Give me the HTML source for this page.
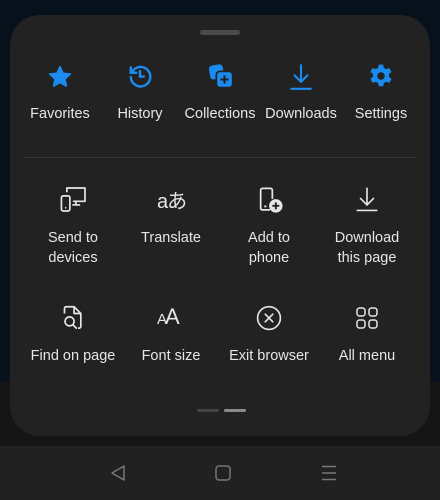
<!DOCTYPE html><html><head><style>
body{margin:0;width:440px;height:500px;background:#07111b;position:relative;overflow:hidden;font-family:"Liberation Sans","Noto Sans CJK JP",sans-serif;color:#e6e6e6}
.band{position:absolute;left:0;top:382px;width:440px;height:64px;background:#151515}
.nav{position:absolute;left:0;top:446px;width:440px;height:54px;background:#212121}
.panel{position:absolute;left:10px;top:15px;width:420px;height:421px;background:#222;border-radius:30px}
.it{position:absolute;text-align:center;font-size:14.5px;line-height:19.5px;width:100px;margin-left:-50px}
.ab{position:absolute}
</style></head><body>
<div class="band"></div><div class="nav"></div>
<div class="panel"></div>
<div class="ab" style="left:200px;top:30px;width:40px;height:5px;border-radius:3px;background:#4a4a4a"></div>
<svg class="ab" style="left:47px;top:64px" width="26" height="26" viewBox="0 0 24 24"><path fill="#1a8cf0" d="M12 2.5l2.9 6.1 6.6.7-5 4.5 1.4 6.6L12 17.1l-5.9 3.3 1.4-6.6-5-4.5 6.6-.7z" stroke="#1a8cf0" stroke-linejoin="round" stroke-width="1.5"/></svg>
<svg class="ab" style="left:127px;top:63px" width="26" height="26" viewBox="0 0 24 24" fill="none" stroke="#1a8cf0" stroke-width="2.2" stroke-linecap="round"><path d="M4.5 8.5A9 9 0 1 1 3.5 13"/><path d="M3.5 4v5h5"/><path d="M12 7.5v5h3.5"/></svg>
<svg class="ab" style="left:207px;top:62px" width="28" height="28" viewBox="0 0 24 24"><rect x="2" y="2.5" width="12" height="12" rx="3" fill="#1a8cf0" transform="rotate(-10 8 8)"/><rect x="8" y="8" width="14" height="14" rx="3" fill="#1a8cf0" stroke="#222" stroke-width="1.5"/><path d="M15 11.5v7M11.5 15h7" stroke="#222" stroke-width="1.8"/></svg>
<svg class="ab" style="left:288px;top:63px" width="26" height="28" viewBox="0 0 24 26" fill="none" stroke="#1a8cf0" stroke-width="2" stroke-linecap="round"><path d="M12 2v15M6 11.5l6 6 6-6M3 24h18"/></svg>
<svg class="ab" style="left:368px;top:63px" width="26" height="26" viewBox="0 0 24 24"><path fill="#1a8cf0" fill-rule="evenodd" d="M10 1.5h4l.6 3 2.2 1.2 2.9-1 2 3.5-2.3 2v2.6l2.3 2-2 3.5-2.9-1-2.2 1.2-.6 3h-4l-.6-3-2.2-1.2-2.9 1-2-3.5 2.3-2v-2.6l-2.3-2 2-3.5 2.9 1L9.4 4.5zM12 8.5a3.5 3.5 0 1 0 0 7 3.5 3.5 0 0 0 0-7z"/></svg>
<div class="it" style="left:60px;top:105px">Favorites</div>
<div class="it" style="left:140px;top:105px">History</div>
<div class="it" style="left:220px;top:105px">Collections</div>
<div class="it" style="left:301px;top:105px">Downloads</div>
<div class="it" style="left:381px;top:105px">Settings</div>
<div class="ab" style="left:24px;top:157px;width:392px;height:1px;background:#363636"></div>
<svg class="ab" style="left:59px;top:185px" width="29" height="29" viewBox="0 0 24 24" fill="none" stroke="#e6e6e6" stroke-width="1.4" stroke-linejoin="round"><path d="M6.5 6V2.5h15v11h-10M14 13.5v3M11 16.5h6.5"/><rect x="2" y="9" width="7" height="12.5" rx="1.5"/><path d="M5 18.8h1"/></svg>
<div class="ab" style="left:157px;top:185px;font-size:20px;color:#e6e6e6;letter-spacing:-1px">aあ</div>
<svg class="ab" style="left:256px;top:186px" width="28" height="28" viewBox="0 0 24 24" fill="none" stroke="#e6e6e6" stroke-width="1.5"><path d="M12 20.5H5.5a1.5 1.5 0 0 1-1.5-1.5V3.5A1.5 1.5 0 0 1 5.5 2h7A1.5 1.5 0 0 1 14 3.5V11"/><path d="M7 17.5h2"/><circle cx="17" cy="17" r="5" fill="#e6e6e6"/><path d="M17 14v6M14 17h6" stroke="#222" stroke-width="1.6"/></svg>
<svg class="ab" style="left:354px;top:186px" width="26" height="26" viewBox="0 0 24 24" fill="none" stroke="#e6e6e6" stroke-width="1.5" stroke-linecap="round"><path d="M12 2v15M6 11.5l6 6 6-6M3 22.5h18"/></svg>
<div class="it" style="left:73px;top:229px">Send to<br>devices</div>
<div class="it" style="left:171px;top:229px">Translate</div>
<div class="it" style="left:269px;top:229px">Add to<br>phone</div>
<div class="it" style="left:367px;top:229px">Download<br>this page</div>
<svg class="ab" style="left:60px;top:304px" width="27" height="28" viewBox="0 0 24 24" fill="none" stroke="#e6e6e6" stroke-width="1.5" stroke-linejoin="round"><path d="M4 8V3.5A1.5 1.5 0 0 1 5.5 2h7l6 6v11.5A1.5 1.5 0 0 1 17 21h-1"/><path d="M12.5 2v6h6"/><circle cx="8.5" cy="15" r="4"/><path d="M11.5 18l3 3" stroke-linecap="round"/></svg>
<div class="ab" style="left:157px;top:304px;font-size:22px;color:#e6e6e6;font-weight:300;letter-spacing:-2px"><span style="font-size:15px">A</span>A</div>
<svg class="ab" style="left:256px;top:305px" width="26" height="26" viewBox="0 0 24 24" fill="none" stroke="#e6e6e6" stroke-width="1.5"><circle cx="12" cy="12" r="10.5"/><path d="M8.5 8.5l7 7M15.5 8.5l-7 7" stroke-linecap="round"/></svg>
<svg class="ab" style="left:355px;top:306px" width="24" height="24" viewBox="0 0 24 24" fill="none" stroke="#e6e6e6" stroke-width="1.5"><rect x="2" y="2" width="8" height="8" rx="2.5"/><rect x="14" y="2" width="8" height="8" rx="2.5"/><rect x="2" y="14" width="8" height="8" rx="2.5"/><rect x="14" y="14" width="8" height="8" rx="2.5"/></svg>
<div class="it" style="left:73px;top:347px">Find on page</div>
<div class="it" style="left:171px;top:347px">Font size</div>
<div class="it" style="left:269px;top:347px">Exit browser</div>
<div class="it" style="left:367px;top:347px">All menu</div>
<div class="ab" style="left:197px;top:409px;width:22px;height:3px;border-radius:2px;background:#444"></div>
<div class="ab" style="left:224px;top:409px;width:22px;height:3px;border-radius:2px;background:#8a8a8a"></div>
<svg class="ab" style="left:110px;top:464px" width="16" height="18" viewBox="0 0 16 18" fill="none" stroke="#777" stroke-width="1.5" stroke-linejoin="round"><path d="M14 2v14L2 9z"/></svg>
<svg class="ab" style="left:215px;top:465px" width="16" height="16" viewBox="0 0 16 16" fill="none" stroke="#777" stroke-width="1.5"><rect x="1" y="1" width="14" height="14" rx="3"/></svg>
<svg class="ab" style="left:321px;top:465px" width="16" height="16" viewBox="0 0 16 16" fill="none" stroke="#777" stroke-width="1.5"><path d="M1 1.5h14M1 8h14M1 14.5h14"/></svg>
</body></html>
